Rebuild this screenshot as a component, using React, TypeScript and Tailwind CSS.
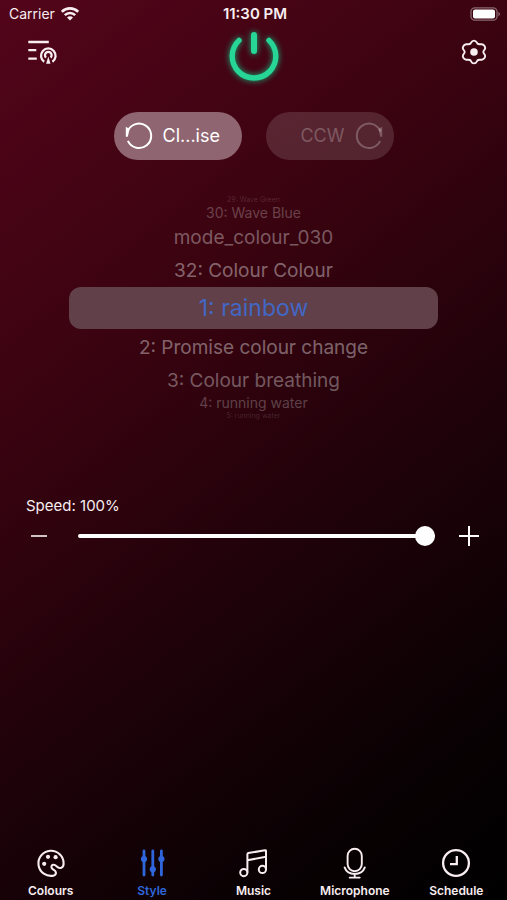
import { useState } from "react";
import type { ReactNode } from "react";

type PickerRow = {
  label: string;
  className: string;
};

// rows shrink and fade as they roll away from the selected one
const before: PickerRow[] = [
  { label: "29: Wave Green", className: "h-2 pb-1 text-[7px] text-white/15" },
  { label: "30: Wave Blue", className: "h-4 text-sm text-white/25" },
  { label: "mode_colour_030", className: "h-8 text-[19px] text-white/35" },
  { label: "32: Colour Colour", className: "h-[34px] text-[19px] text-white/40" },
];

const after: PickerRow[] = [
  { label: "2: Promise colour change", className: "h-9 text-[19px] text-white/40" },
  { label: "3: Colour breathing", className: "h-[30px] text-[19px] text-white/35" },
  { label: "4: running water", className: "h-4 text-sm text-white/25" },
  { label: "5: running water", className: "h-2 text-[7px] text-white/15" },
];

const tabs: { label: string; icon: ReactNode }[] = [
  { label: "Colours", icon: <PaletteIcon /> },
  { label: "Style", icon: <SlidersIcon /> },
  { label: "Music", icon: <MusicIcon /> },
  { label: "Microphone", icon: <MicIcon /> },
  { label: "Schedule", icon: <ClockIcon /> },
];

function WifiIcon() {
  return (
    <svg width="18" height="14" viewBox="0 0 18 14" fill="none" stroke="currentColor" strokeWidth="2.6">
      <path d="M0.8 4.8a11.6 11.6 0 0 1 16.4 0" />
      <path d="M3.8 8.2a7.4 7.4 0 0 1 10.4 0" />
      <path d="M9 13.6 6 10.6a4.2 4.2 0 0 1 6 0Z" fill="currentColor" stroke="none" />
    </svg>
  );
}

function BatteryIcon() {
  return (
    <svg width="31" height="14" viewBox="0 0 31 14" fill="none">
      <rect x="1" y="0.8" width="26" height="12.4" rx="3.8" stroke="#fff" strokeOpacity="0.4" strokeWidth="1.3" />
      <rect x="3" y="2.6" width="22" height="8.8" rx="2" fill="#fff" />
      <path d="M28.5 4.8v4.4c1.8-.7 1.8-3.7 0-4.4Z" fill="#fff" fillOpacity="0.5" />
    </svg>
  );
}

function ModesIcon() {
  return (
    <svg width="32" height="26" viewBox="0 0 32 26" fill="none" stroke="currentColor" strokeWidth="2.3">
      <path d="M0.3 3h20.5M0.3 11.2h8M0.3 19.6h8.5" />
      <path d="M16.2 22.8a7.3 7.3 0 1 1 8.2 0" />
      <path d="M18 18.6a3.3 3.3 0 1 1 4.6 0" />
      <path d="m20.3 17.5 2.2 7.3h-4.4Z" fill="currentColor" stroke="none" />
    </svg>
  );
}

function PowerIcon() {
  return (
    <svg
      width="64"
      height="64"
      viewBox="0 0 64 64"
      fill="none"
      stroke="#27d596"
      strokeLinecap="round"
      className="drop-shadow-[0_0_3px_#12b57a]"
    >
      <path d="M17 16.4a21.8 21.8 0 1 0 30 0" strokeWidth="5.4" />
      <path d="M32 11v16" strokeWidth="6" />
    </svg>
  );
}

function GearIcon() {
  return (
    <svg width="26" height="26" viewBox="0 0 26 26" fill="none" stroke="currentColor" strokeWidth="1.9" strokeLinejoin="round">
      <path d="M13 1.6C15.4 1.6 15.6 3.3 16.4 4.5C17.6 5.8 18.8 5 20.8 5.3C23.4 5.7 24.9 8.2 23.8 10.2C22.9 11.6 22.3 12 22.3 13C22.3 14 22.9 14.4 23.8 15.8C24.9 17.8 23.4 20.3 20.8 20.7C18.8 21 17.6 20.2 16.4 21.5C15.6 22.7 15.4 24.4 13 24.4C10.6 24.4 10.4 22.7 9.6 21.5C8.4 20.2 7.2 21 5.2 20.7C2.6 20.3 1.1 17.8 2.2 15.8C3.1 14.4 3.7 14 3.7 13C3.7 12 3.1 11.6 2.2 10.2C1.1 8.2 2.6 5.7 5.2 5.3C7.2 5 8.4 5.8 9.6 4.5C10.4 3.3 10.6 1.6 13 1.6Z" />
      <circle cx="13" cy="13" r="3.8" fill="currentColor" stroke="none" />
    </svg>
  );
}

function RotateIcon({ flip = false }: { flip?: boolean }) {
  return (
    <svg
      width="28"
      height="28"
      viewBox="0 0 28 28"
      fill="none"
      stroke="currentColor"
      strokeWidth="2"
      className={flip ? "-scale-x-100" : ""}
    >
      <path d="M2.6 9.4A12.2 12.2 0 1 1 2.9 18.9" />
      <path d="M0.8 4.8 4.6 7 2.8 14.8H0.8Z" fill="currentColor" stroke="none" />
    </svg>
  );
}

function PaletteIcon() {
  return (
    <svg width="32" height="32" viewBox="0 0 32 32" fill="none" stroke="currentColor" strokeWidth="2.1">
      <path d="M18.7 28.6A12.6 12.6 0 1 1 28.6 16.5C28.7 20.6 25.2 22.1 22.6 20.2C21 18.9 20.2 17.3 18 17.8C15.9 18.4 16 21 17.6 22.1C19.2 23.2 20.8 23.8 20.9 25.6C21 27.2 20.1 28.2 18.7 28.6Z" />
      <g fill="currentColor" stroke="none">
        <circle cx="13" cy="9.8" r="2.1" />
        <circle cx="20.6" cy="10.2" r="2.1" />
        <circle cx="9.2" cy="16.8" r="2.1" />
      </g>
    </svg>
  );
}

function SlidersIcon() {
  return (
    <svg width="32" height="32" viewBox="0 0 32 32" fill="currentColor" stroke="currentColor" strokeWidth="2.8" strokeLinecap="round">
      <path d="M8 4v24M16.8 4v24M25.4 4v24" />
      <g stroke="none">
        <circle cx="8" cy="12" r="3.1" />
        <circle cx="16.8" cy="22.3" r="3.1" />
        <circle cx="25.4" cy="12" r="3.1" />
      </g>
    </svg>
  );
}

function MusicIcon() {
  return (
    <svg width="32" height="32" viewBox="0 0 32 32" fill="none" stroke="currentColor" strokeWidth="2" strokeLinejoin="round">
      <path d="M10.4 25.5V7.2Q10.4 6.3 11.3 6.1L28 3.2Q29 3.1 29 4V22.5" />
      <path d="M10.4 13.2 29 9.8" />
      <circle cx="6.8" cy="25.6" r="3.6" />
      <circle cx="25.4" cy="22.4" r="3.6" />
    </svg>
  );
}

function MicIcon() {
  return (
    <svg width="32" height="32" viewBox="0 0 32 32" fill="none" stroke="currentColor" strokeWidth="1.9" strokeLinecap="round">
      <rect x="8.6" y="1.8" width="14.2" height="22.4" rx="7.1" />
      <path d="M5.6 20.4C7.3 25.2 11.2 27 15.7 27S24.1 25.2 25.8 20.4M15.7 27v3.4M10.7 30.6h10" />
    </svg>
  );
}

function ClockIcon() {
  return (
    <svg width="32" height="32" viewBox="0 0 32 32" fill="none" stroke="currentColor" strokeWidth="2.3">
      <circle cx="16" cy="16" r="12.9" />
      <path d="M16.8 9v8.2H10" />
    </svg>
  );
}

function Row({ label, className }: PickerRow) {
  return (
    <li className={`flex w-full items-center justify-center leading-none ${className}`}>
      {label}
    </li>
  );
}

export default function App() {
  const [clockwise, setClockwise] = useState(true);
  const [speed, setSpeed] = useState(100);
  const [active, setActive] = useState("Style");

  const on = "bg-[#8f6571] text-white";
  const off = "bg-white/13 text-white/25";

  return (
    <main className="flex min-h-screen flex-col bg-[linear-gradient(142deg,#53051a_0%,#3b0310_32%,#1f020a_60%,#090103_84%,#000_100%)] font-['Inter','Liberation_Sans',sans-serif] text-[#f8edf0]">
      {/* Status bar */}
      <div className="grid h-7 grid-cols-3 items-center pl-[9px] pr-[6px] text-[15px]">
        <div className="flex items-center gap-[6px] text-sm">
          <span>Carrier</span>
          <WifiIcon />
        </div>
        <span className="text-center font-semibold">11:30 PM</span>
        <div className="flex justify-end">
          <BatteryIcon />
        </div>
      </div>

      {/* Header */}
      <header className="-mt-1 grid h-16 grid-cols-3 items-center pl-7 pr-5">
        <button type="button" aria-label="Modes" className="-mt-2 w-8">
          <ModesIcon />
        </button>
        <button type="button" aria-label="Power" className="-ml-2 justify-self-center">
          <PowerIcon />
        </button>
        <button type="button" aria-label="Settings" className="-mt-2 w-[26px] justify-self-end">
          <GearIcon />
        </button>
      </header>

      {/* Direction */}
      <div className="mt-6 flex justify-center gap-6">
        <button
          type="button"
          aria-pressed={clockwise}
          onClick={() => setClockwise(true)}
          className={`flex h-12 w-32 items-center gap-[10px] rounded-full pl-[11px] text-lg ${clockwise ? on : off}`}
        >
          <RotateIcon />
          Cl...ise
        </button>
        <button
          type="button"
          aria-pressed={!clockwise}
          onClick={() => setClockwise(false)}
          className={`flex h-12 w-32 items-center justify-end gap-[10px] rounded-full pr-[11px] text-lg ${clockwise ? off : on}`}
        >
          CCW
          <RotateIcon flip />
        </button>
      </div>

      {/* Mode picker */}
      <ul className="mx-[69px] mt-[37px] flex flex-col items-center">
        {before.map((row) => (
          <Row key={row.label} {...row} />
        ))}
        <li className="flex h-[42px] w-full items-center justify-center rounded-xl bg-[#614049] text-[23px] text-[#4267c4]">
          1: rainbow
        </li>
        {after.map((row) => (
          <Row key={row.label} {...row} />
        ))}
      </ul>

      {/* Speed */}
      <section className="mt-[77px] pl-[26px] pr-7">
        <label htmlFor="speed" className="block text-[15px] leading-5">
          Speed: {speed}%
        </label>
        <div className="flex h-10 items-center">
          <button
            type="button"
            aria-label="Slower"
            onClick={() => setSpeed(Math.max(0, speed - 1))}
            className="flex h-10 w-[26px] items-center justify-center"
          >
            <svg width="20" height="20" viewBox="0 0 20 20" stroke="#cfc3c7" strokeWidth="2">
              <path d="M2 10h16" />
            </svg>
          </button>
          <input
            id="speed"
            type="range"
            min={0}
            max={100}
            value={speed}
            onChange={(e) => setSpeed(Number(e.target.value))}
            style={{
              backgroundImage: `linear-gradient(to right, #fff ${speed}%, rgba(255,255,255,0.3) ${speed}%)`,
            }}
            className="ml-[26px] mr-6 h-1 min-w-0 flex-1 appearance-none rounded-full [&::-webkit-slider-thumb]:size-5 [&::-webkit-slider-thumb]:appearance-none [&::-webkit-slider-thumb]:rounded-full [&::-webkit-slider-thumb]:bg-white"
          />
          <button
            type="button"
            aria-label="Faster"
            onClick={() => setSpeed(Math.min(100, speed + 1))}
            className="flex h-10 w-5 items-center justify-center"
          >
            <svg width="20" height="20" viewBox="0 0 20 20" stroke="#fff" strokeWidth="2">
              <path d="M0 10h20M10 0v20" />
            </svg>
          </button>
        </div>
      </section>

      {/* Tabs */}
      <nav className="mt-auto grid grid-cols-5 pb-px">
        {tabs.map((tab) => (
          <button
            key={tab.label}
            type="button"
            onClick={() => setActive(tab.label)}
            className={`flex flex-col items-center gap-1 text-xs font-semibold ${
              active === tab.label ? "text-[#2f66dc]" : "text-[#f8edf0]"
            }`}
          >
            {tab.icon}
            <span>{tab.label}</span>
          </button>
        ))}
      </nav>
    </main>
  );
}
